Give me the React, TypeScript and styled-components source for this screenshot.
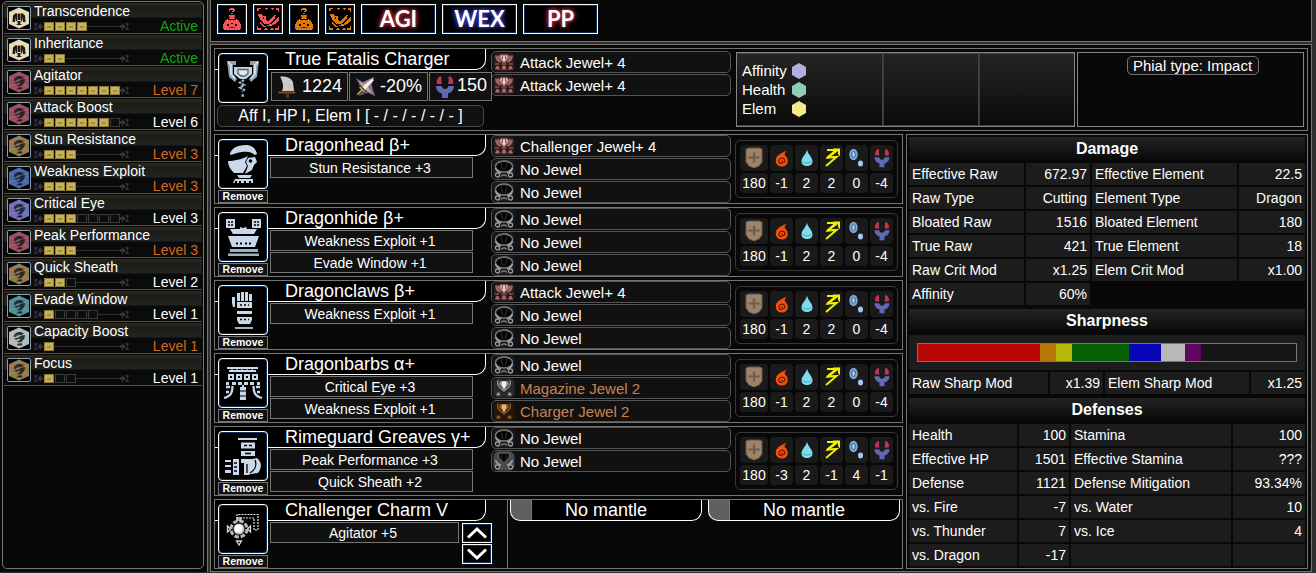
import React from "react";
import styled, { createGlobalStyle } from "styled-components";

const LINE = "#757575";

const Global = createGlobalStyle`
  * { box-sizing: border-box; }
  html, body { margin: 0; background: #2b2b2b; overflow: hidden; }
  body { font-family: "Liberation Sans", Arial, sans-serif; font-size: 14px; color: #fff; }
  svg { display: block; flex: none; }
  button { font-family: inherit; color: inherit; margin: 0; padding: 0; }
`;

const Page = styled.div`
  display: flex;
  gap: 2px;
  width: 1316px;
  height: 573px;
  background: #303030;
`;

const Sidebar = styled.aside`
  width: 208px;
  height: 572px;
  padding: 1px 0 0 2px;
  background: #080808;
  border-right: 1px solid ${LINE};
`;

const SkillList = styled.div`
  width: 202px;
  height: 568px;
  padding: 1px;
  border: 1px solid ${LINE};
  border-radius: 5px;
  display: flex;
  flex-direction: column;
  gap: 1px;
`;

const SkillItem = styled.div`
  height: 31px;
  flex: none;
  display: flex;
  padding: 2px 4px 0 3px;
  gap: 3px;
  border-bottom: 1px solid #505050;
  background: linear-gradient(#33270f 0 1px, #2a2311 2px, #1b1d1c 4px, #222422 14px, #0a0a0a 15px, #0b0b0b 100%);
`;

const SkillIconFrame = styled.div`
  width: 24px;
  height: 24px;
  margin-top: 1px;
  border: 1px solid #86a0b4;
  border-radius: 2px;
  background: #000;
`;

const SkillBody = styled.div`
  flex: 1;
  display: flex;
  flex-direction: column;
`;

const SkillName = styled.div`
  height: 13px;
  line-height: 13px;
  white-space: nowrap;
`;

const SkillMeter = styled.div`
  height: 15px;
  display: flex;
  justify-content: space-between;
`;

const Track = styled.div`
  display: flex;
  align-items: center;
  width: 95px;
  height: 15px;
  padding-top: 1px;
`;

const Rail = styled.div`
  flex: 1;
  height: 9px;
  display: flex;
  gap: 1px;
  padding-left: 1px;
  background: linear-gradient(transparent 4px, #2e2e2e 4px 5px, transparent 5px);
`;

const Pip = styled.i<{ $on: boolean }>`
  width: 10px;
  height: 9px;
  border: 1px solid ${(p) => (p.$on ? "#8f7c3a" : "#3a3a3a")};
  background: ${(p) =>
    p.$on ? "linear-gradient(#a18c45, #a18c45) 2px 3px / 4px 2px no-repeat, #c6b05a" : "#0d0d0d"};
`;

const Level = styled.span<{ $color: string }>`
  color: ${(p) => p.$color};
  line-height: 17px;
`;

const MainColumn = styled.div`
  display: flex;
  flex-direction: column;
  gap: 2px;
  width: 1102px;
`;

const Toolbar = styled.header`
  display: flex;
  gap: 6px;
  height: 42px;
  padding: 4px 0 0 6px;
  background: #080808;
  border: 1px solid ${LINE};
  border-top: 0;
`;

const ToolButton = styled.button<{ $w?: number; $glow?: string }>`
  width: ${(p) => p.$w ?? 30}px;
  height: 30px;
  display: flex;
  align-items: center;
  justify-content: center;
  background: #000;
  border: 1px solid #fff;
  box-shadow: inset 0 0 0 1px #083058;
  font: 700 22px/26px Lato, sans-serif;
  text-shadow: 0 0 3px ${(p) => p.$glow}, 0 0 5px ${(p) => p.$glow}, 0 0 6px ${(p) => p.$glow};
`;

const Main = styled.main`
  height: 528px;
  padding: 3px 3px 2px;
  background: #080808;
  border: 1px solid ${LINE};
  display: flex;
  flex-direction: column;
  gap: 3px;
`;

const Columns = styled.div`
  display: flex;
  gap: 3px;
`;

const Rows = styled.div`
  display: flex;
  flex-direction: column;
  gap: 3px;
  width: 689px;
`;

const Row = styled.section<{ $h?: number }>`
  position: relative;
  display: flex;
  flex: none;
  height: ${(p) => p.$h ?? 70}px;
  border: 1px solid ${LINE};
`;

const Equip = styled.div`
  width: 276px;
  flex: none;
`;

const Title = styled.h2`
  margin: 0 0 1px;
  width: 271px;
  height: 21px;
  padding-left: 70px;
  font-size: 18px;
  font-weight: 400;
  line-height: 20px;
  white-space: nowrap;
  background: #000;
  border: solid #fff;
  border-width: 0 1px 1px 0;
  border-bottom-right-radius: 10px;
`;

const IconColumn = styled.div`
  position: absolute;
  left: 3px;
  top: 4px;
  width: 50px;
`;

const EquipIcon = styled.div`
  width: 50px;
  height: 50px;
  background: #000;
  border: 1px solid #fff;
  border-radius: 4px;
  box-shadow: inset 0 0 0 1px #083058;
`;

const Remove = styled.button`
  display: block;
  width: 50px;
  height: 13px;
  margin-top: 1px;
  border: 1px solid ${LINE};
  background: #111;
  font-size: 10.5px;
  font-weight: 700;
  line-height: 11px;
`;

const SkillBoxes = styled.div`
  display: flex;
  flex-direction: column;
  gap: 1px;
  margin-left: 55px;
`;

const SkillBox = styled.div<{ $w?: number }>`
  width: ${(p) => p.$w ?? 203}px;
  height: 21px;
  border: 1px solid ${LINE};
  background: #111;
  text-align: center;
  line-height: 20px;
  padding-right: 3px;
`;

const WeaponStats = styled.div`
  display: flex;
  gap: 1px;
  margin: 2px 0 4px 56px;
  position: relative;
`;

const WeaponStat = styled.div<{ $w: number; $lift?: number }>`
  display: flex;
  align-items: center;
  justify-content: space-between;
  width: ${(p) => p.$w}px;
  height: 29px;
  flex: none;
  padding: 0 5px 0 3px;
  border: 1px solid ${LINE};
  background: #111;
  font-size: 18px;
  span { padding-bottom: ${(p) => p.$lift ?? 0}px; }
`;

const Augments = styled.div`
  width: 267px;
  height: 22px;
  margin-left: 2px;
  border: 1px solid #484848;
  border-radius: 5px;
  background: #111;
  font-size: 16px;
  line-height: 20px;
  text-align: center;
`;

const Jewels = styled.div<{ $top?: number }>`
  width: 240px;
  flex: none;
  display: flex;
  flex-direction: column;
  gap: 1px;
  padding-top: ${(p) => p.$top ?? 0}px;
`;

const Jewel = styled.div<{ $color?: string }>`
  display: flex;
  align-items: center;
  gap: 5px;
  height: 22px;
  padding-left: 1px;
  border: 1px solid #555;
  border-radius: 5px;
  background: #111;
  font-size: 15px;
  color: ${(p) => p.$color ?? "#fff"};
`;

const ElementBox = styled.div`
  width: 163px;
  height: 58px;
  margin: 5px 0 0 4px;
  padding: 4px;
  border: 1px solid #383838;
  border-radius: 5px;
  display: grid;
  grid-template-columns: 28px repeat(5, 23px);
  grid-template-rows: 26px 20px;
  gap: 2px;
`;

const ElementCell = styled.div`
  display: flex;
  align-items: center;
  justify-content: center;
  background: #1a1a1a;
  border-radius: 4px;
`;

const Awakening = styled.div`
  width: 339px;
  height: 75px;
  margin: 3px 2px 0 5px;
  border: 1px solid #858585;
  display: grid;
  grid-template-columns: 146px 96px 95px;
`;

const AwakenCell = styled.div`
  padding: 7px 0 0 5px;
  border: solid #444;
  border-width: 1px 1px 1px 0;
  & + & { border-left: 1px solid #3a3a3a; }
  &:last-child { border-right: 0; }
  background: linear-gradient(#232523, #0a0a0a);
`;

const AwakenLine = styled.div`
  display: flex;
  align-items: center;
  width: 65px;
  justify-content: space-between;
  height: 19px;
  font-size: 15px;
`;

const PhialPanel = styled.div`
  width: 227px;
  height: 75px;
  margin-top: 3px;
  padding: 3px 0 0 4px;
  border: 1px solid #858585;
  text-align: center;
`;

const Phial = styled.span`
  display: inline-block;
  width: 132px;
  height: 19px;
  border: 1px solid ${LINE};
  border-radius: 5px;
  background: #111;
  font-size: 15px;
  line-height: 18px;
`;

const Arrows = styled.div`
  display: flex;
  flex-direction: column;
  gap: 1px;
  margin-top: 1px;
`;

const ArrowButton = styled.button`
  width: 30px;
  height: 20px;
  border: 1px solid #fff;
  background: #000;
  box-shadow: inset 0 0 0 1px #083058;
  display: flex;
  align-items: center;
  justify-content: center;
`;

const CharmLine = styled.div`
  display: flex;
  gap: 3px;
`;

const Mantles = styled.div`
  width: 396px;
  margin-left: 16px;
  padding-left: 2px;
  border-left: 1px solid ${LINE};
  display: flex;
  gap: 6px;
`;

const Mantle = styled.div`
  width: 192px;
  height: 21px;
  flex: none;
  border: solid #fff;
  border-width: 0 1px 1px;
  border-radius: 0 0 10px 10px;
  background: linear-gradient(90deg, #606060 20px, #777 20px 21px, #000 21px);
  font-size: 18px;
  line-height: 20px;
  text-align: center;
`;

const StatsPanel = styled.section`
  width: 402px;
  height: 435px;
  padding: 2px;
  border: 1px solid ${LINE};
  display: flex;
  flex-direction: column;
  gap: 4px;
`;

const StatSection = styled.div`
  display: flex;
  flex-direction: column;
  gap: 2px;
`;

const SectionTitle = styled.h3`
  margin: 0;
  height: 24px;
  font-size: 16px;
  line-height: 23px;
  text-align: center;
  background: linear-gradient(#232423, #070707);
`;

const StatGrid = styled.div<{ $cols: string }>`
  display: grid;
  grid-template-columns: ${(p) => p.$cols};
  grid-auto-rows: 22px;
  gap: 2px;
`;

const StatCell = styled.div<{ $right?: boolean }>`
  padding: 0 3px;
  background: #1c1c1c;
  line-height: 22px;
  white-space: nowrap;
  text-align: ${(p) => (p.$right ? "right" : "left")};
`;

const SharpPanel = styled.div`
  height: 35px;
  padding: 8px;
  background: #1c1c1c;
`;

const SharpBar = styled.div`
  display: flex;
  height: 19px;
  border: 1px solid ${LINE};
  background: #151515;
`;

const SharpSegment = styled.i<{ $w: number; $c: string }>`
  width: ${(p) => p.$w}px;
  background: ${(p) => p.$c};
`;

const ORANGE = "#cf6a1d";
const GREEN = "#0ca80c";

type Skill = [string, string, number, number, string, string];
const skills: Skill[] = [
  ["Transcendence", "Active", 4, 4, "#e9d9b4", GREEN],
  ["Inheritance", "Active", 2, 2, "#e9d9b4", GREEN],
  ["Agitator", "Level 7", 7, 7, "#98505c", ORANGE],
  ["Attack Boost", "Level 6", 6, 7, "#98505c", "#fff"],
  ["Stun Resistance", "Level 3", 3, 3, "#957b4a", ORANGE],
  ["Weakness Exploit", "Level 3", 3, 3, "#4a69a8", ORANGE],
  ["Critical Eye", "Level 3", 3, 7, "#7470b8", "#fff"],
  ["Peak Performance", "Level 3", 3, 3, "#98505c", ORANGE],
  ["Quick Sheath", "Level 2", 2, 3, "#957b4a", "#fff"],
  ["Evade Window", "Level 1", 1, 5, "#528f98", "#fff"],
  ["Capacity Boost", "Level 1", 1, 1, "#b4bcba", ORANGE],
  ["Focus", "Level 1", 1, 3, "#957b4a", "#fff"],
];

const SkillIcon = ({ color, set }: { color: string; set: boolean }) => (
  <svg width="22" height="22" viewBox="0 0 22 22">
    <path d="M11 .5 21 5v12l-10 4.500L1 17V5z" fill={color} />
    <path d="M11 1v20M1 6l20 10M21 6 1 16" stroke="#fff" strokeOpacity=".1" />
    {set ? (
      <g fill="#1b1a18">
        <path d="M5 8.500 8 6l1.500 1v6L8 14.500V10l-1 5H4.500zM17 8.500 14 6l-1.500 1v6l1.500 1.500V10l1 5h2.500zM10 6.500h2V13h-2z" />
        <path d="M9 14h4l-1 2.500 2 1.500H8l2-1.500z" />
      </g>
    ) : (
      <g fill="#11191b" fillOpacity=".82">
        <path d="M5.500 9.500C6 6.500 9.500 4.500 13 5l3 1.500L13.500 8 9 8.500l-1 1.500z" />
        <path d="m6 11.500 4-1 3.500-2L17 8l-.5 3.500-3 3.500-3.500.5-1-1 3-1.500-.5-1.500L8 13z" />
        <path d="m9 17 4-1 1.500 1-1 1.500h-4z" />
      </g>
    )}
  </svg>
);

const TrackEnd = ({ flip }: { flip?: boolean }) => (
  <svg width="9" height="9" viewBox="0 0 9 9" style={flip ? { transform: "scaleX(-1)" } : undefined}>
    <path d="M0 1h4L1.500 4.500 4 8H0l1-3.500z" fill="#333" />
    <path d="M7 1 3.500 4.500 7 8V6L6 5.500h3v-2H6L7 3z" fill="#3c3c3c" />
  </svg>
);

const Potion = ({ c }: { c: string }) => (
  <svg width="24" height="24" viewBox="0 0 24 24" shapeRendering="crispEdges">
    <path d="M9 2h1V1h4v1h1v2h-1v1h-2V4h1V3h-3v1H9zM11 6h2v1h-2zM9 8h6v2h-1v1h1v1h2v1h2v2h1v2h1v5h-1v1H4v-1H3v-5h1v-2h1v-2h2v-1h2v-1h1v-1H9z" fill={c} />
    <path d="M8 12h8v1H8zM7 17h2v2H7zM11 16h2v1h-2zM15 17h2v2h-2zM9 20h1v1H9zM11 20h2v1h-2zM14 20h1v1h-1z" fill="#000" />
  </svg>
);

const Pepper = ({ c }: { c: string }) => (
  <svg width="24" height="24" viewBox="0 0 24 24" shapeRendering="crispEdges">
    <path d="M1 1h4v1H3v2H1zM8 1h4l-2 2zM14 1h4v1l-2 1zM20 1h3v4h-1V3h-2zM1 19h1v2h3v2H1zM8 23l2-3 2 3zM14 23l2-3 2 3zM22 19h1v4h-4v-2h3z" fill={c} />
    <path d="M2 7h3l2 2h3v4l2 1 7-6h1l-2 5-5 4H9l-4-3-2-4zM22 10h1v3l-4 4-4 2h-4l-1-1 5-1 4-3zM4 15l4 4h2v1H7l-3-3z" fill={c} />
    <path d="M7 10h1v2H7z" fill="#000" />
  </svg>
);

const SwordIcon = () => (
  <svg width="25" height="25" viewBox="0 0 25 25">
    <path d="M5 2.500C10 2 16 3 18 8l1 9H7c2-4 1-9-2-14.500z" fill="#c9c9c9" />
    <path d="M3.500 17.500h17v2h-17z" fill="#7a4d31" />
    <path d="M11 19.500h3v4.500h-3z" fill="#573017" />
  </svg>
);

const AffinityIcon = () => (
  <svg width="24" height="24" viewBox="0 0 27 25">
    <path d="M3 2.500 11 7l4-2 9-4-3 9 1 4 3 9-8-4-4 1-8 3 3-8-1-6z" fill="#8068a0" />
    <path d="M6 5l6 4 9-6-4 9 5 8-8-4-6 2 2-6z" fill="#c4ad7c" />
    <path d="M22 3 10 13l3 3L23.500 5z" fill="#f1f1ee" />
    <path d="m7 12 7 7M10.500 15.500 4 22" stroke="#211b14" strokeWidth="4" />
    <path d="m7.500 12.500 6 6M10 16l-5 5" stroke="#b39b65" strokeWidth="2" />
  </svg>
);

const DragonIcon = ({ s = 24 }: { s?: number }) => (
  <svg width={s} height={s} viewBox="0 0 24 24">
    <path d="M6.500 1.500C4 3.500 3 6 4 9h5c-1-3-.5-5-.5-7.500zM17.500 1.500C20 3.500 21 6 20 9h-5c1-3 .5-5 .5-7.500z" fill="#bd3652" />
    <path d="M3 11h5.500c.5 2 2 3 3.500 3s3-1 3.500-3H21c0 4-2.500 6.500-6 7.500V23H9v-4.500C5.500 17.500 3 15 3 11z" fill="#6269b4" />
  </svg>
);

const AttackJewelIcon = () => (
  <svg width="22" height="20" viewBox="0 0 22 20">
    <rect x=".5" y=".5" width="21" height="19" rx="5" fill="#2b1b1b" />
    <path d="M2 3.500h5l-1 3 3 4H6L3 8zM20 3.500h-5l1 3-3 4h3L19 8z" fill="#9c6260" />
    <path d="M7.500 2.500h7L16 6l-5 5.500L6 6z" fill="#b98582" />
    <path d="M8 3.500h6l-1 3.500-2 2.500L9 7z" fill="#ecd6d3" />
    <path d="M9.500 3v4M12.500 3v4" stroke="#8a5352" />
    <path d="M2 12h4M16 12h4M8.500 12h5" stroke="#8a5352" strokeWidth="1.500" />
    <path d="M2 17.500 3.500 14h2L7 17.500zM8.500 17.500l1-4h3l1 4zM15 17.500l1.500-3.500h2l1.500 3.500z" fill="#a76764" />
  </svg>
);

const EmptyJewelIcon = ({ small }: { small?: boolean }) => (
  <svg width="22" height="20" viewBox="0 0 22 20">
    <rect x=".5" y=".5" width="21" height="19" rx="5" fill={small ? "#484b49" : "#1c1d1c"} />
    {small ? (
      <path d="M6.500 2h9c2 3 .5 6.500-4.500 9.500C6 8.500 4.500 5 6.500 2z" fill="#030303" stroke="#6f7371" />
    ) : (
      <ellipse cx="11" cy="7.500" rx="8.500" ry="5.500" fill="#030303" stroke="#7e8280" strokeWidth="1.300" />
    )}
    <path d="M9 2.500C8 5 8.500 8 10 11M13 2.500c1 2.500.5 5.500-1 8.500" fill="none" stroke="#333634" />
    <path d="M2.500 9C3.500 12 5.500 13.500 8 14M19.500 9c-1 3-3 4.500-5.500 5" fill="none" stroke="#a3a7a5" strokeWidth="1.500" />
    <circle cx="4.500" cy="16" r="2" fill="#111" stroke="#979b99" strokeWidth="1.300" />
    <circle cx="17.500" cy="16" r="2" fill="#111" stroke="#979b99" strokeWidth="1.300" />
    {!small && <path d="M8 17.500c1-2 5-2 6 0" fill="none" stroke="#777b79" strokeWidth="1.500" />}
  </svg>
);

const FilledJewelIcon = ({ a, b, bg }: { a: string; b: string; bg: string }) => (
  <svg width="22" height="20" viewBox="0 0 22 20">
    <rect x=".5" y=".5" width="21" height="19" rx="5" fill={bg} />
    <path d="M5.500 2.500C3 6 6 9.500 11 13c5-3.500 8-7 5.500-10.500" fill="none" stroke={a} strokeWidth="1.300" />
    <path d="M7.500 3h7L16 6l-5 6-5-6z" fill={a} />
    <path d="M9.500 3.500h3l1 2.500-2.500 5.500L8.500 6z" fill={b} />
    <path d="m3 17.500 1.500-3h2l1 3zM14.500 17.500l1-3h2l1.500 3z" fill={a} />
  </svg>
);

const ShieldIcon = () => (
  <svg width="20" height="22" viewBox="0 0 20 22">
    <path d="m2 2 3-1h10l3 1v13l-3 4-5 2-5-2-3-4z" fill="#9c8369" stroke="#6b5846" />
    <path d="M10 5.500v10M4.500 10.500h11" stroke="#6f5c4b" strokeWidth="2.200" />
  </svg>
);

const FireIcon = () => (
  <svg width="16" height="19" viewBox="0 0 18 20">
    <path d="M14.500 1C10 3.500 3 5 2 11.500 1.500 16.500 5 19 8.500 19c4 0 7-2.500 7-6.500C15.500 8.500 12 7 12 5.500 12 4 13 2.500 14.500 1z" fill="#f4500c" />
    <path d="M9.500 15.500c-2.500.8-4.500-1-4-3.200C6 9.500 10 8.500 11.800 11c1 1.600.3 3.500-1.300 3.500-1.500 0-2-1.200-1.300-2.200" fill="none" stroke="#5a1503" strokeWidth="1.200" />
  </svg>
);

const WaterIcon = () => (
  <svg width="14" height="18" viewBox="0 0 14 18">
    <path d="M7 .5C7.500 5 12.500 8 12.500 12.500 12.500 15.500 10 17 7 17s-5.500-1.500-5.500-4.500C1.500 8 6.500 5 7 .5z" fill="#7fdcec" />
    <path d="M3 12.500c1 2 6.500 2 8 0" fill="none" stroke="#3fa1b3" />
  </svg>
);

const ThunderIcon = () => (
  <svg width="20" height="22" viewBox="0 0 20 22">
    <path d="M5 3h9L6 10.500l8.500-.5L4 19" fill="none" stroke="#f0f000" strokeWidth="2" strokeLinejoin="miter" />
    <path d="m5 11 11-8.500" stroke="#f0f000" strokeWidth="2.300" />
    <path d="M11 1.500h7v8l-2-2.500V3.500h-5z" fill="#f0f000" />
  </svg>
);

const IceIcon = () => (
  <svg width="17" height="20" viewBox="0 0 17 20">
    <ellipse cx="5.500" cy="6.500" rx="4.200" ry="5.700" fill="#7ea8dc" />
    <ellipse cx="5.500" cy="6.500" rx="1.800" ry="3.200" fill="#b5d3f6" stroke="#31567e" />
    <ellipse cx="12.500" cy="15.500" rx="2.500" ry="3" fill="#a4c7f5" />
  </svg>
);

const P = "#c9d9ea";
const equipShapes: Record<string, React.ReactNode> = {
  weapon: (
    <>
      <path d="M9 8h9v4h-3v9l4 5-2 3-6-5zM41 8h-9v4h3v9l-4 5 2 3 6-5z" fill="#8fa1b1" />
      <path d="M10 9l3 3v9l4 5M40 9l-3 3v9l-4 5" stroke="#cfdde9" strokeWidth="2" fill="none" />
      <path d="M16 14h18v7l-6 5h-6l-6-5z" fill="#c4d3e0" />
      <path d="M20 16.500h10v4L27 23h-4l-3-2.500z" fill="#dce8f2" stroke="#53626e" strokeWidth="1.300" />
      <path d="m26 27-4 2.500 4 2.500-4 2.500 4 2.500-2 2M23.500 42.500h3" stroke="#9fb2c3" strokeWidth="2.300" strokeDasharray="2.500 1" fill="none" />
    </>
  ),
  head: (
    <>
      <path d="M12 16c0-6 7-10 16-10 6 0 10 4 11 9l-2 1c-3-3-8-4-13-3-4 .5-8 2-12 3z" fill={P} />
      <path d="M10 22c6 0 14-2 18-4l2-1-3 6 2 4-4 7h-9C13 31 10 27 10 22z" fill={P} />
      <path d="M30 19l7-1 2 5-3 3-2 5-7 4 3-8-2-4z" fill={P} />
      <circle cx="32.500" cy="22" r="1.800" fill="#000" />
      <path d="M19 36h15l-2 3H21zM17 40h18v4h-2v-2h-2v2h-3v-2h-2v2h-3v-2h-2v2h-2v-2h-2v2h-2z" fill={P} />
    </>
  ),
  chest: (
    <>
      <path d="M8 7h9v9H8zM34 7h9v9h-9zM12 17h10v-2l3 1 3-1 1 2h10l-3 5H15z" fill={P} />
      <path d="M11 9v5M14 9v5M37 9v5M40 9v5" stroke="#000" strokeDasharray="2 1" strokeWidth="1.500" />
      <path d="M10 24h31l-4 11H14z" fill={P} />
      <path d="M18 31.500h2M22 31.500h2M27 31.500h2M31 31.500h2" stroke="#000" strokeWidth="2" />
      <path d="M12 37h28v3H12zM10 41.500h31v2.500H10z" fill="#9fb0bf" />
    </>
  ),
  arm: (
    <>
      <path d="M14 12h3v10h-2l-1-4zM19 8h3v8h-3zM23 7h3v9h-3zM27 7h3v9h-3zM31 9h3v7h-3zM19 17h15v6H19zM19 26h15v3H19zM19 32h15v3l-2 4H21l-2-4z" fill={P} />
      <path d="M22 20h2M26 20h2M30 20h1M22 34.500h2M26 34.500h2M30 34.500h1" stroke="#000" strokeWidth="1.500" />
      <path d="M17 42h18v2H17z" fill="#9fb0bf" />
    </>
  ),
  waist: (
    <>
      <path d="M9 9h31v2H9zM11 12h27v2H11zM10 16h6v6h-6zM18 16h6v6h-6zM26 16h6v6h-6zM34 16h6v6h-6zM8 24h3v3H8zM14 24h4v3h-4zM20 24h4v3h-4zM26 24h4v3h-4zM32 24h4v3h-4zM39 24h3v3h-3z" fill={P} />
      <path d="M14 11v1M19 11v1M24 11v1M29 11v1M34 11v1" stroke={P} />
      <path d="M12 19h2M20 19h2M28 19h2M36 19h2" stroke="#000" strokeWidth="2" />
      <path d="M8 29h4M8 34h3M38 29h4M39 34h3M14.500 28c0 6-1 10-8.500 12M35.500 28c0 6 1 10 8.500 12" fill="none" stroke={P} strokeWidth="2.300" />
      <path d="M22 29h6v13h-6zM24 27h2v2h-2z" fill={P} />
      <path d="M22 33h6M22 38h6" stroke="#000" />
    </>
  ),
  leg: (
    <>
      <path d="M20 7h19v2H20zM23 11.500h14v6H23zM23 20h14v5H23z" fill={P} />
      <path d="M26 14.500h3M31 14.500h3M27 22.500h6" stroke="#000" strokeWidth="1.500" />
      <path d="M23 28h12l4-1c5 4 5 10 1 15l-7 1-3 1h-4V32h-3z" fill={P} />
      <path d="M37 29c2 5 0 10-5 13M29 33v9" stroke="#000" strokeWidth="1.300" fill="none" />
      <path d="M7 29h6v2H7zM7 34h6v2H7zM7 39h6v3H7zM15 28h6v16h-6z" fill={P} />
      <path d="M16 32h3M16 36h3M16 40h3" stroke="#000" strokeWidth="1.500" />
    </>
  ),
  charm: (
    <>
      <path d="M19 15v-4.500h21V26h-4V14H22" fill="none" stroke="#e8e8e8" strokeWidth="1.200" strokeDasharray="2 1" />
      <circle cx="21" cy="25" r="8" fill="none" stroke="#b9b9b9" strokeWidth="3" strokeDasharray="4.500 1.780" />
      <circle cx="21" cy="25" r="5.500" fill="#bdbdbd" />
      <circle cx="20.500" cy="24.500" r="4" fill="#fff" />
      <path d="m9.500 22 3 3-3 3zM32.500 22l-3 3 3 3zM18.500 37h5L21 41zM19 14h4v2h-4z" fill="#000" stroke="#d8d8d8" strokeWidth="1.300" />
    </>
  ),
};

const EquipmentIcon = ({ kind }: { kind: string }) => (
  <EquipIcon>
    <svg width="48" height="48" viewBox="1 1 48 48">{equipShapes[kind]}</svg>
  </EquipIcon>
);

type JewelKind = "attack" | "empty4" | "empty2" | "magazine" | "charger";
const jewelIcons: Record<JewelKind, React.ReactNode> = {
  attack: <AttackJewelIcon />,
  empty4: <EmptyJewelIcon />,
  empty2: <EmptyJewelIcon small />,
  magazine: <FilledJewelIcon a="#969a98" b="#f0f4f2" bg="#292b2a" />,
  charger: <FilledJewelIcon a="#95602c" b="#e8b877" bg="#271607" />,
};

const JewelSlot = ({ kind, name }: { kind: JewelKind; name: string }) => (
  <Jewel $color={name.endsWith(" 2") ? "#ca8150" : undefined}>
    {jewelIcons[kind]}
    <span>{name}</span>
  </Jewel>
);

type Armor = { kind: string; name: string; skills: string[]; jewels: [JewelKind, string][]; res: number[] };
const none: [JewelKind, string] = ["empty4", "No Jewel"];
const armor: Armor[] = [
  { kind: "head", name: "Dragonhead β+", skills: ["Stun Resistance +3"], jewels: [["attack", "Challenger Jewel+ 4"], none, none], res: [180, -1, 2, 2, 0, -4] },
  { kind: "chest", name: "Dragonhide β+", skills: ["Weakness Exploit +1", "Evade Window +1"], jewels: [none, none, none], res: [180, -1, 2, 2, 0, -4] },
  { kind: "arm", name: "Dragonclaws β+", skills: ["Weakness Exploit +1"], jewels: [["attack", "Attack Jewel+ 4"], none, none], res: [180, -1, 2, 2, 0, -4] },
  { kind: "waist", name: "Dragonbarbs α+", skills: ["Critical Eye +3", "Weakness Exploit +1"], jewels: [none, ["magazine", "Magazine Jewel 2"], ["charger", "Charger Jewel 2"]], res: [180, -1, 2, 2, 0, -4] },
  { kind: "leg", name: "Rimeguard Greaves γ+", skills: ["Peak Performance +3", "Quick Sheath +2"], jewels: [none, ["empty2", "No Jewel"]], res: [180, -3, 2, -1, 4, -1] },
];

const resistIcons = [<ShieldIcon />, <FireIcon />, <WaterIcon />, <ThunderIcon />, <IceIcon />, <DragonIcon s={20} />];

const ArmorRow = ({ item }: { item: Armor }) => (
  <Row>
    <Equip>
      <Title>{item.name}</Title>
      <SkillBoxes>
        {item.skills.map((s) => (
          <SkillBox key={s}>{s}</SkillBox>
        ))}
      </SkillBoxes>
    </Equip>
    <IconColumn>
      <EquipmentIcon kind={item.kind} />
      <Remove>Remove</Remove>
    </IconColumn>
    <Jewels>
      {item.jewels.map(([kind, name], i) => (
        <JewelSlot key={i} kind={kind} name={name} />
      ))}
    </Jewels>
    <ElementBox>
      {resistIcons.map((icon, i) => (
        <ElementCell key={i}>{icon}</ElementCell>
      ))}
      {item.res.map((n, i) => (
        <ElementCell key={i}>{n}</ElementCell>
      ))}
    </ElementBox>
  </Row>
);

const Stats = ({ cols, cells }: { cols: string; cells: string[] }) => (
  <StatGrid $cols={cols}>
    {cells.map((c, i) => (
      <StatCell key={i} $right={i % 2 === 1}>
        {c}
      </StatCell>
    ))}
  </StatGrid>
);

const damage = [
  "Effective Raw", "672.97", "Effective Element", "22.5",
  "Raw Type", "Cutting", "Element Type", "Dragon",
  "Bloated Raw", "1516", "Bloated Element", "180",
  "True Raw", "421", "True Element", "18",
  "Raw Crit Mod", "x1.25", "Elem Crit Mod", "x1.00",
  "Affinity", "60%",
];

const defenses = [
  "Health", "100", "Stamina", "100",
  "Effective HP", "1501", "Effective Stamina", "???",
  "Defense", "1121", "Defense Mitigation", "93.34%",
  "vs. Fire", "-7", "vs. Water", "10",
  "vs. Thunder", "7", "vs. Ice", "4",
  "vs. Dragon", "-17", "", "",
];

const sharpness: [number, string][] = [
  [122, "#b80606"],
  [16, "#b87808"],
  [16, "#b8b808"],
  [57, "#066006"],
  [32, "#0606b8"],
  [24, "#b8b8b8"],
  [16, "#600660"],
];

const augments: [string, string][] = [
  ["Affinity", "#b3b0e0"],
  ["Health", "#90ceb4"],
  ["Elem", "#f2eb88"],
];

const Chevron = ({ down }: { down?: boolean }) => (
  <svg width="24" height="16" viewBox="0 0 24 16">
    <path d={down ? "m3 3.500 9 8.500 9-8.500" : "m3 12.500 9-8.500 9 8.500"} fill="none" stroke="#fff" strokeWidth="3" />
  </svg>
);

export default function App() {
  return (
    <>
      <Global />
      <Page>
        <Sidebar>
          <SkillList>
            {skills.map(([name, level, on, max, color, tone], i) => (
              <SkillItem key={name}>
                <SkillIconFrame>
                  <SkillIcon color={color} set={i < 2} />
                </SkillIconFrame>
                <SkillBody>
                  <SkillName>{name}</SkillName>
                  <SkillMeter>
                    <Track>
                      <TrackEnd />
                      <Rail>
                        {Array.from({ length: max }, (_, n) => (
                          <Pip key={n} $on={n < on} />
                        ))}
                      </Rail>
                      <TrackEnd flip />
                    </Track>
                    <Level $color={tone}>{level}</Level>
                  </SkillMeter>
                </SkillBody>
              </SkillItem>
            ))}
          </SkillList>
        </Sidebar>
        <MainColumn>
          <Toolbar>
            <ToolButton><Potion c="#f4555a" /></ToolButton>
            <ToolButton><Pepper c="#f4555a" /></ToolButton>
            <ToolButton><Potion c="#d9780f" /></ToolButton>
            <ToolButton><Pepper c="#d9780f" /></ToolButton>
            <ToolButton $w={75} $glow="#b02838">AGI</ToolButton>
            <ToolButton $w={75} $glow="#3a3ab8">WEX</ToolButton>
            <ToolButton $w={75} $glow="#b02838">PP</ToolButton>
          </Toolbar>
          <Main>
            <Row $h={83}>
              <Equip>
                <Title>True Fatalis Charger</Title>
                <WeaponStats>
                  <WeaponStat $w={77}><SwordIcon /><span>1224</span></WeaponStat>
                  <WeaponStat $w={79}><AffinityIcon /><span>-20%</span></WeaponStat>
                  <WeaponStat $w={63} $lift={2}><DragonIcon /><span>150</span></WeaponStat>
                </WeaponStats>
                <Augments>Aff I, HP I, Elem I [ - / - / - / - / - ]</Augments>
              </Equip>
              <IconColumn>
                <EquipmentIcon kind="weapon" />
              </IconColumn>
              <Jewels $top={2}>
                <JewelSlot kind="attack" name="Attack Jewel+ 4" />
                <JewelSlot kind="attack" name="Attack Jewel+ 4" />
              </Jewels>
              <Awakening>
                <AwakenCell>
                  {augments.map(([label, color]) => (
                    <AwakenLine key={label}>
                      {label}
                      <svg width="16" height="16" viewBox="0 0 16 16">
                        <path d="M8 0 15 4v8L8 16 1 12V4z" fill={color} />
                      </svg>
                    </AwakenLine>
                  ))}
                </AwakenCell>
                <AwakenCell />
                <AwakenCell />
              </Awakening>
              <PhialPanel>
                <Phial>Phial type: Impact</Phial>
              </PhialPanel>
            </Row>
            <Columns>
              <Rows>
                {armor.map((item) => (
                  <ArmorRow key={item.kind} item={item} />
                ))}
                <Row>
                  <Equip>
                    <Title>Challenger Charm V</Title>
                    <CharmLine>
                      <SkillBoxes>
                        <SkillBox $w={189}>Agitator +5</SkillBox>
                      </SkillBoxes>
                      <Arrows>
                        <ArrowButton><Chevron /></ArrowButton>
                        <ArrowButton><Chevron down /></ArrowButton>
                      </Arrows>
                    </CharmLine>
                  </Equip>
                  <IconColumn>
                    <EquipmentIcon kind="charm" />
                    <Remove>Remove</Remove>
                  </IconColumn>
                  <Mantles>
                    <Mantle>No mantle</Mantle>
                    <Mantle>No mantle</Mantle>
                  </Mantles>
                </Row>
              </Rows>
              <StatsPanel>
                <StatSection>
                  <SectionTitle>Damage</SectionTitle>
                  <Stats cols="115px 64px 145px 66px" cells={damage} />
                </StatSection>
                <StatSection>
                  <SectionTitle>Sharpness</SectionTitle>
                  <SharpPanel>
                    <SharpBar>
                      {sharpness.map(([w, c]) => (
                        <SharpSegment key={c} $w={w} $c={c} />
                      ))}
                    </SharpBar>
                  </SharpPanel>
                  <Stats cols="139px 53px 144px 54px" cells={["Raw Sharp Mod", "x1.39", "Elem Sharp Mod", "x1.25"]} />
                </StatSection>
                <StatSection>
                  <SectionTitle>Defenses</SectionTitle>
                  <Stats cols="108px 50px 160px 72px" cells={defenses} />
                </StatSection>
              </StatsPanel>
            </Columns>
          </Main>
        </MainColumn>
      </Page>
    </>
  );
}
